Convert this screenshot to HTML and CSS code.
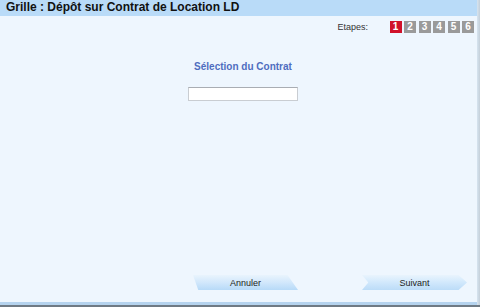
FILE: index.html
```
<!DOCTYPE html>
<html lang="fr">
<head>
<meta charset="utf-8">
<title>Grille : Dépôt sur Contrat de Location LD</title>
<link rel="stylesheet" href="styles.css">
</head>
<body>
<div class="window">
  <div class="panel">
    <div class="titlebar">Grille : Dépôt sur Contrat de Location LD</div>
    <div class="content">
      <div class="steps">
        <span class="steps-label">Etapes:</span>
        <span class="step active">1</span>
        <span class="step">2</span>
        <span class="step">3</span>
        <span class="step">4</span>
        <span class="step">5</span>
        <span class="step">6</span>
      </div>
      <div class="section-title">Sélection du Contrat</div>
      <div class="field-row"><input class="field" type="text"></div>
      <div class="spacer"></div>
      <div class="actions">
        <button class="btn btn-cancel" type="button">Annuler</button>
        <button class="btn btn-next" type="button">Suivant</button>
      </div>
    </div>
    <div class="bottom-band"></div>
  </div>
  <div class="right-edge"></div>
</div>
</body>
</html>
```
FILE: styles.css
```
html, body {
  margin: 0;
  padding: 0;
  width: 480px;
  height: 307px;
  overflow: hidden;
  background: #eef6fe;
  font-family: "Liberation Sans", Arial, sans-serif;
}

.window {
  display: flex;
  width: 480px;
  height: 307px;
  border-bottom: 2px solid #6f7a84;
  box-sizing: border-box;
}

.panel {
  flex: 1;
  display: flex;
  flex-direction: column;
  background: #eef6fe;
}

.right-edge {
  width: 3px;
  background: linear-gradient(to right, #d6e4f0, #c4cfd9);
}

.titlebar {
  height: 16px;
  line-height: 15px;
  padding-left: 6px;
  background: #b9dbf8;
  color: #111;
  font-weight: bold;
  font-size: 12px;
}

.content {
  flex: 1;
  display: flex;
  flex-direction: column;
}

.steps {
  display: flex;
  justify-content: flex-end;
  align-items: center;
  gap: 2.5px;
  padding: 5px 3px 0 0;
  height: 12px;
}

.steps-label {
  font-size: 9px;
  color: #333;
  margin-right: 19px;
  line-height: 12px;
}

.step {
  width: 12px;
  height: 12px;
  line-height: 12px;
  text-align: center;
  background: #9a9a9a;
  color: #fff;
  font-size: 10px;
  font-weight: bold;
}

.step.active {
  background: #d0112a;
}

.section-title {
  margin-top: 28px;
  text-align: center;
  color: #4f6dbf;
  font-weight: bold;
  font-size: 10px;
  padding-left: 9px;
}

.field-row {
  display: flex;
  justify-content: center;
  margin-top: 15px;
  padding-left: 9px;
}

.field {
  width: 110px;
  height: 14px;
  box-sizing: border-box;
  border: 1px solid #c9cdd2;
  border-top-color: #a9adb3;
  background: #fff;
  margin: 0;
  padding: 0;
}

.spacer {
  flex: 1;
}

.actions {
  display: flex;
  height: 15px;
  margin-bottom: 12px;
  padding-left: 193px;
}

.btn {
  border: 0;
  margin: 0;
  padding: 0;
  height: 15px;
  width: 105px;
  font-family: "Liberation Sans", Arial, sans-serif;
  font-size: 9px;
  color: #222;
  cursor: pointer;
}

.btn-cancel {
  clip-path: polygon(0 0, 90% 0, 100% 100%, 5% 100%);
  background: linear-gradient(to bottom, #e9f4fd 0%, #cfe6fb 55%, #b7daf8 100%);
}

.btn-next {
  margin-left: 64px;
  clip-path: polygon(0 0, 92% 0, 100% 50%, 92% 100%, 0 100%, 6% 50%);
  background: linear-gradient(to bottom, #e9f4fd 0%, #d1e8fc 50%, #bcdcf8 100%);
}

.bottom-band {
  height: 3px;
  background: #b5d3ee;
}
```
